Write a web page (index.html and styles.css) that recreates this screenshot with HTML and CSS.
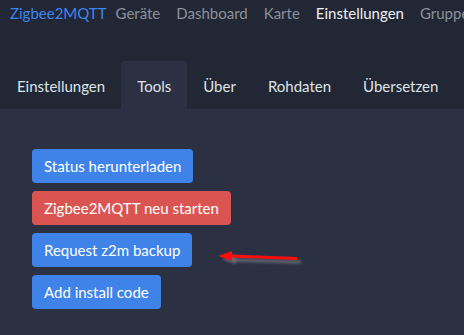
FILE: index.html
```html
<!DOCTYPE html>
<html lang="de">
<head>
  <meta charset="UTF-8" />
  <meta name="viewport" content="width=device-width, initial-scale=1" />
  <title>Zigbee2MQTT - Einstellungen</title>
  <link rel="stylesheet" href="styles.css">
</head>
<body>
  <header class="topbar">
    <a class="brand" href="#">Zigbee2MQTT</a>
    <nav class="mainnav">
      <a href="#">Geräte</a>
      <a href="#">Dashboard</a>
      <a href="#">Karte</a>
      <a href="#" class="active">Einstellungen</a>
      <a href="#">Gruppen</a>
    </nav>
  </header>

  <ul class="tabs">
    <li><a href="#">Einstellungen</a></li>
    <li><a href="#" class="active">Tools</a></li>
    <li><a href="#">Über</a></li>
    <li><a href="#">Rohdaten</a></li>
    <li><a href="#">Übersetzen</a></li>
  </ul>

  <main class="panel">
    <div class="tools">
      <button class="btn btn-primary">Status herunterladen</button>
      <button class="btn btn-danger">Zigbee2MQTT neu starten</button>
      <div class="marked">
        <button class="btn btn-primary">Request z2m backup</button>
        <!-- Markierung aus dem Screenshot -->
        <svg class="arrow" width="100" height="24" viewBox="0 0 100 24">
          <defs>
            <filter id="blur" x="-20%" y="-100%" width="140%" height="300%">
              <feGaussianBlur stdDeviation="1.4" />
            </filter>
          </defs>
          <g fill="#7a7d86" stroke="#7a7d86" opacity="0.8" filter="url(#blur)">
            <line x1="16" y1="11" x2="82" y2="13" stroke-width="3" />
            <polygon points="3,10 17,6 17,15" stroke="none" />
          </g>
          <g transform="translate(-4,-4)" fill="#ff0d0d" stroke="#ff0d0d">
            <line x1="16" y1="11" x2="82" y2="13.5" stroke-width="3" />
            <polygon points="3,11 17,6 17,16" stroke="none" />
          </g>
        </svg>
      </div>
      <button class="btn btn-primary">Add install code</button>
    </div>
  </main>
</body>
</html>
```

FILE: styles.css
```css
body {
  margin: 0;
  height: 100vh;
  display: flex;
  flex-direction: column;
  font-family: Lato, "Noto Sans", sans-serif;
  font-size: 15px;
  line-height: 22px;
  background-color: #222735;
  color: #dee2e6;
  overflow: hidden;
}

a {
  text-decoration: none;
}

.topbar {
  flex-shrink: 0;
  display: flex;
  align-items: center;
  height: 25px;
  padding: 0 0 0 10px;
  white-space: nowrap;
}

.brand {
  color: #3d85f0;
  margin-right: 1px;
}

.mainnav {
  display: flex;
}

.mainnav a {
  color: #8b909b;
  padding: 0 8px;
}

.mainnav a.active {
  color: #eef0f3;
}

.tabs {
  flex-shrink: 0;
  display: flex;
  list-style: none;
  margin: 36px 0 0;
  padding: 0 0 0 1px;
}

.tabs a {
  display: block;
  padding: 14px 16px 12px;
  color: #dee2e6;
  border-radius: 4px 4px 0 0;
}

.tabs a.active {
  background-color: #2b3042;
}

.panel {
  flex: 1;
  min-height: 0;
  background-color: #2b3042;
  padding: 40px 32px 0;
}

.tools {
  display: flex;
  flex-direction: column;
  align-items: flex-start;
  gap: 8px;
}

.marked {
  position: relative;
}

.btn {
  font-family: inherit;
  font-size: 15px;
  line-height: 22px;
  padding: 6px 12px;
  border: none;
  border-radius: 4px;
  color: #fff;
  cursor: pointer;
}

.btn-primary {
  background-color: #3f83e8;
}

.btn-danger {
  background-color: #da5551;
}

.arrow {
  position: absolute;
  left: 187px;
  top: 16px;
}
```
